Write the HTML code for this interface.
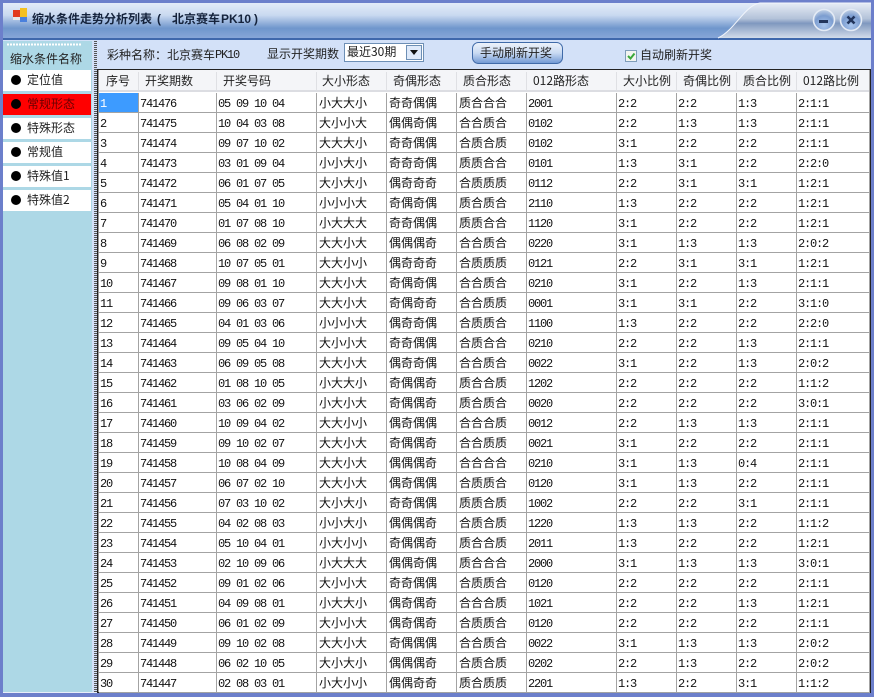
<!DOCTYPE html>
<html><head><meta charset="utf-8"><style>
html,body{margin:0;padding:0}
body{width:874px;height:697px;position:relative;overflow:hidden;background:#d3e1f8;font:12px/20px "WenQuanYi Zen Hei","Noto Sans CJK SC",sans-serif;color:#111}
.a{position:absolute;white-space:nowrap}
.item{position:absolute;left:3px;width:88px;height:21px;background:#fff;line-height:20px}
.item i{position:absolute;left:8px;top:5px;width:10px;height:10px;border-radius:5px;background:#000}
.item span{position:absolute;left:24px;top:0;color:#222}
.hd{position:absolute;top:71px;height:20px;line-height:20px;color:#222;white-space:nowrap}
.sep{position:absolute;top:72px;width:1px;height:18px;background:#dfe0e4}
.m{font:12px/20px "Liberation Mono",monospace;letter-spacing:-1.2px}
table{position:absolute;left:99px;top:93px;border-collapse:separate;border-spacing:0;table-layout:fixed;width:771px}
td{height:15px;padding:4px 0 0 1px;box-sizing:content-box;border-right:1px solid #a3a3a3;border-bottom:1px solid #a3a3a3;font:12px/15px "Liberation Mono",monospace;letter-spacing:-1.2px;color:#111;white-space:nowrap;overflow:hidden}
td.c{height:19px;padding:0 0 0 2px;font:12px/19px "WenQuanYi Zen Hei","Noto Sans CJK SC",sans-serif;letter-spacing:0}
</style></head><body>
<svg class="a" style="left:0;top:0" width="874" height="697" viewBox="0 0 874 697">
<defs>
<linearGradient id="t" x1="0" y1="0" x2="0" y2="1"><stop offset="0" stop-color="#e3ebf8"/><stop offset=".35" stop-color="#c9d9f0"/><stop offset=".72" stop-color="#6f96cc"/><stop offset="1" stop-color="#87a6d8"/></linearGradient>
<linearGradient id="r" x1="0" y1="0" x2="0" y2="1"><stop offset="0" stop-color="#e6ecf6"/><stop offset=".45" stop-color="#b3c2d9"/><stop offset=".58" stop-color="#7f98bf"/><stop offset="1" stop-color="#d3dcea"/></linearGradient>
<radialGradient id="b" cx=".5" cy=".75" r=".7"><stop offset="0" stop-color="#a9c6ee"/><stop offset=".65" stop-color="#7c9dd0"/><stop offset="1" stop-color="#b7c9e2"/></radialGradient>
<linearGradient id="bt" x1="0" y1="0" x2="0" y2="1"><stop offset="0" stop-color="#eef3fb"/><stop offset=".5" stop-color="#c9daf2"/><stop offset="1" stop-color="#6f97d3"/></linearGradient>
</defs>
<rect width="874" height="697" fill="#6c7fcb"/>
<rect x="3" y="3" width="868" height="35" fill="url(#t)"/>
<rect x="3" y="38" width="868" height="2" fill="#3f68ac"/>
<path d="M718 38C735 30 745 5 760 3H871V38Z" fill="url(#r)"/>
<path d="M718 38C735 30 745 5 760 3H871" fill="none" stroke="#f2f5fb" stroke-width="1"/>
<rect x="3" y="40" width="868" height="652" fill="#d3e1f8"/>
<rect x="3" y="692" width="868" height="1" fill="#e8eef9"/>
<rect x="13" y="10" width="7" height="7" fill="#e23a1c"/><rect x="20" y="8" width="7" height="9" fill="#f4c020"/><rect x="20" y="17" width="7" height="5" fill="#4a80dc"/><rect x="13" y="17" width="7" height="3" fill="#e8e8e8"/>
<circle cx="824" cy="20" r="10.5" fill="url(#b)" stroke="#e4ebf5" stroke-width="1.6"/>
<rect x="819" y="20" width="9" height="3" fill="#22355c"/>
<circle cx="851" cy="20" r="10.5" fill="url(#b)" stroke="#e4ebf5" stroke-width="1.6"/>
<path d="M847.5 16.5L854.5 23.5M854.5 16.5L847.5 23.5" stroke="#22355c" stroke-width="2.6"/>
<rect x="3" y="41" width="89" height="651" fill="#add8e6"/>
<line x1="7" y1="44.5" x2="82" y2="44.5" stroke="#fff" stroke-width="2" stroke-dasharray="2 1"/>
<rect x="93" y="41" width="4" height="651" fill="#d3e1f8"/>
<line x1="95.5" y1="41" x2="95.5" y2="692" stroke="#555" stroke-width="3" stroke-dasharray="1 1"/>
<rect x="472.5" y="42.5" width="90" height="21" rx="6" fill="url(#bt)" stroke="#3f6aa8"/>
<rect x="344.5" y="43.5" width="79" height="18" fill="#fff" stroke="#6d8fb5"/>
<rect x="406.5" y="45.5" width="15" height="14" fill="#dfeafa" stroke="#6d8fb5"/>
<path d="M410 50h8l-4 5z" fill="#111"/>
<rect x="625.5" y="50.5" width="11" height="11" fill="#f2f4f0" stroke="#7f9db9"/>
<path d="M628 56l2.5 2.5 4-5" fill="none" stroke="#3aa83a" stroke-width="2"/>
<rect x="97" y="69" width="774" height="624" fill="#fff"/>
<rect x="97.5" y="69.5" width="773" height="623" fill="none" stroke="#222"/>
<rect x="98" y="70" width="1" height="622" fill="#9a9a9a"/>
<rect x="869" y="70" width="1" height="622" fill="#a3a3a3"/>
<rect x="99" y="70" width="770" height="22" fill="#f4f5f8"/>
<rect x="99" y="90" width="770" height="2" fill="#dcdde2"/>
</svg>
<div class="a" style="left:32px;top:9px;font-weight:bold;color:#15233c">缩水条件走势分析列表</div>
<div class="a" style="left:157px;top:9px;font:bold 12px/20px 'Liberation Sans',sans-serif;color:#15233c">(</div>
<div class="a" style="left:172px;top:9px;font-weight:bold;color:#15233c">北京赛车</div>
<div class="a" style="left:221px;top:9px;font:bold 12px/20px 'Liberation Sans',sans-serif;color:#15233c">PK10</div>
<div class="a" style="left:254px;top:9px;font:bold 12px/20px 'Liberation Sans',sans-serif;color:#15233c">)</div>
<div class="a" style="left:10px;top:49px;color:#222">缩水条件名称</div>
<div class="item" style="top:70px"><i></i><span>定位值</span></div>
<div class="item" style="top:94px;background:#f00"><i></i><span style="color:#6a0000">常规形态</span></div>
<div class="item" style="top:118px"><i></i><span>特殊形态</span></div>
<div class="item" style="top:142px"><i></i><span>常规值</span></div>
<div class="item" style="top:166px"><i></i><span>特殊值1</span></div>
<div class="item" style="top:190px"><i></i><span>特殊值2</span></div>
<div class="a" style="left:107px;top:45px;color:#222">彩种名称：</div>
<div class="a" style="left:167px;top:45px;color:#222">北京赛车</div>
<div class="a m" style="left:215px;top:45px;color:#222">PK10</div>
<div class="a" style="left:267px;top:44px;color:#222">显示开奖期数</div>
<div class="a" style="left:347px;top:42px;color:#222">最近30期</div>
<div class="a" style="left:480px;top:43px;color:#222">手动刷新开奖</div>
<div class="a" style="left:640px;top:45px;color:#222">自动刷新开奖</div>
<div class="hd" style="left:106px">序号</div>
<div class="hd" style="left:145px">开奖期数</div>
<div class="hd" style="left:223px">开奖号码</div>
<div class="hd" style="left:322px">大小形态</div>
<div class="hd" style="left:393px">奇偶形态</div>
<div class="hd" style="left:463px">质合形态</div>
<div class="hd" style="left:533px">012路形态</div>
<div class="hd" style="left:623px">大小比例</div>
<div class="hd" style="left:683px">奇偶比例</div>
<div class="hd" style="left:743px">质合比例</div>
<div class="hd" style="left:803px">012路比例</div>
<div class="sep" style="left:138px"></div><div class="sep" style="left:216px"></div><div class="sep" style="left:316px"></div><div class="sep" style="left:386px"></div><div class="sep" style="left:456px"></div><div class="sep" style="left:526px"></div><div class="sep" style="left:616px"></div><div class="sep" style="left:676px"></div><div class="sep" style="left:736px"></div><div class="sep" style="left:796px"></div>
<table>
<colgroup><col style="width:40px"><col style="width:78px"><col style="width:100px"><col style="width:70px"><col style="width:70px"><col style="width:70px"><col style="width:90px"><col style="width:60px"><col style="width:60px"><col style="width:60px"><col style="width:73px"></colgroup>
<tr><td style="background:#3d9bff;color:#fff">1</td><td>741476</td><td>05 09 10 04</td><td class="c">小大大小</td><td class="c">奇奇偶偶</td><td class="c">质合合合</td><td>2001</td><td>2:2</td><td>2:2</td><td>1:3</td><td>2:1:1</td></tr>
<tr><td>2</td><td>741475</td><td>10 04 03 08</td><td class="c">大小小大</td><td class="c">偶偶奇偶</td><td class="c">合合质合</td><td>0102</td><td>2:2</td><td>1:3</td><td>1:3</td><td>2:1:1</td></tr>
<tr><td>3</td><td>741474</td><td>09 07 10 02</td><td class="c">大大大小</td><td class="c">奇奇偶偶</td><td class="c">合质合质</td><td>0102</td><td>3:1</td><td>2:2</td><td>2:2</td><td>2:1:1</td></tr>
<tr><td>4</td><td>741473</td><td>03 01 09 04</td><td class="c">小小大小</td><td class="c">奇奇奇偶</td><td class="c">质质合合</td><td>0101</td><td>1:3</td><td>3:1</td><td>2:2</td><td>2:2:0</td></tr>
<tr><td>5</td><td>741472</td><td>06 01 07 05</td><td class="c">大小大小</td><td class="c">偶奇奇奇</td><td class="c">合质质质</td><td>0112</td><td>2:2</td><td>3:1</td><td>3:1</td><td>1:2:1</td></tr>
<tr><td>6</td><td>741471</td><td>05 04 01 10</td><td class="c">小小小大</td><td class="c">奇偶奇偶</td><td class="c">质合质合</td><td>2110</td><td>1:3</td><td>2:2</td><td>2:2</td><td>1:2:1</td></tr>
<tr><td>7</td><td>741470</td><td>01 07 08 10</td><td class="c">小大大大</td><td class="c">奇奇偶偶</td><td class="c">质质合合</td><td>1120</td><td>3:1</td><td>2:2</td><td>2:2</td><td>1:2:1</td></tr>
<tr><td>8</td><td>741469</td><td>06 08 02 09</td><td class="c">大大小大</td><td class="c">偶偶偶奇</td><td class="c">合合质合</td><td>0220</td><td>3:1</td><td>1:3</td><td>1:3</td><td>2:0:2</td></tr>
<tr><td>9</td><td>741468</td><td>10 07 05 01</td><td class="c">大大小小</td><td class="c">偶奇奇奇</td><td class="c">合质质质</td><td>0121</td><td>2:2</td><td>3:1</td><td>3:1</td><td>1:2:1</td></tr>
<tr><td>10</td><td>741467</td><td>09 08 01 10</td><td class="c">大大小大</td><td class="c">奇偶奇偶</td><td class="c">合合质合</td><td>0210</td><td>3:1</td><td>2:2</td><td>1:3</td><td>2:1:1</td></tr>
<tr><td>11</td><td>741466</td><td>09 06 03 07</td><td class="c">大大小大</td><td class="c">奇偶奇奇</td><td class="c">合合质质</td><td>0001</td><td>3:1</td><td>3:1</td><td>2:2</td><td>3:1:0</td></tr>
<tr><td>12</td><td>741465</td><td>04 01 03 06</td><td class="c">小小小大</td><td class="c">偶奇奇偶</td><td class="c">合质质合</td><td>1100</td><td>1:3</td><td>2:2</td><td>2:2</td><td>2:2:0</td></tr>
<tr><td>13</td><td>741464</td><td>09 05 04 10</td><td class="c">大小小大</td><td class="c">奇奇偶偶</td><td class="c">合质合合</td><td>0210</td><td>2:2</td><td>2:2</td><td>1:3</td><td>2:1:1</td></tr>
<tr><td>14</td><td>741463</td><td>06 09 05 08</td><td class="c">大大小大</td><td class="c">偶奇奇偶</td><td class="c">合合质合</td><td>0022</td><td>3:1</td><td>2:2</td><td>1:3</td><td>2:0:2</td></tr>
<tr><td>15</td><td>741462</td><td>01 08 10 05</td><td class="c">小大大小</td><td class="c">奇偶偶奇</td><td class="c">质合合质</td><td>1202</td><td>2:2</td><td>2:2</td><td>2:2</td><td>1:1:2</td></tr>
<tr><td>16</td><td>741461</td><td>03 06 02 09</td><td class="c">小大小大</td><td class="c">奇偶偶奇</td><td class="c">质合质合</td><td>0020</td><td>2:2</td><td>2:2</td><td>2:2</td><td>3:0:1</td></tr>
<tr><td>17</td><td>741460</td><td>10 09 04 02</td><td class="c">大大小小</td><td class="c">偶奇偶偶</td><td class="c">合合合质</td><td>0012</td><td>2:2</td><td>1:3</td><td>1:3</td><td>2:1:1</td></tr>
<tr><td>18</td><td>741459</td><td>09 10 02 07</td><td class="c">大大小大</td><td class="c">奇偶偶奇</td><td class="c">合合质质</td><td>0021</td><td>3:1</td><td>2:2</td><td>2:2</td><td>2:1:1</td></tr>
<tr><td>19</td><td>741458</td><td>10 08 04 09</td><td class="c">大大小大</td><td class="c">偶偶偶奇</td><td class="c">合合合合</td><td>0210</td><td>3:1</td><td>1:3</td><td>0:4</td><td>2:1:1</td></tr>
<tr><td>20</td><td>741457</td><td>06 07 02 10</td><td class="c">大大小大</td><td class="c">偶奇偶偶</td><td class="c">合质质合</td><td>0120</td><td>3:1</td><td>1:3</td><td>2:2</td><td>2:1:1</td></tr>
<tr><td>21</td><td>741456</td><td>07 03 10 02</td><td class="c">大小大小</td><td class="c">奇奇偶偶</td><td class="c">质质合质</td><td>1002</td><td>2:2</td><td>2:2</td><td>3:1</td><td>2:1:1</td></tr>
<tr><td>22</td><td>741455</td><td>04 02 08 03</td><td class="c">小小大小</td><td class="c">偶偶偶奇</td><td class="c">合质合质</td><td>1220</td><td>1:3</td><td>1:3</td><td>2:2</td><td>1:1:2</td></tr>
<tr><td>23</td><td>741454</td><td>05 10 04 01</td><td class="c">小大小小</td><td class="c">奇偶偶奇</td><td class="c">质合合质</td><td>2011</td><td>1:3</td><td>2:2</td><td>2:2</td><td>1:2:1</td></tr>
<tr><td>24</td><td>741453</td><td>02 10 09 06</td><td class="c">小大大大</td><td class="c">偶偶奇偶</td><td class="c">质合合合</td><td>2000</td><td>3:1</td><td>1:3</td><td>1:3</td><td>3:0:1</td></tr>
<tr><td>25</td><td>741452</td><td>09 01 02 06</td><td class="c">大小小大</td><td class="c">奇奇偶偶</td><td class="c">合质质合</td><td>0120</td><td>2:2</td><td>2:2</td><td>2:2</td><td>2:1:1</td></tr>
<tr><td>26</td><td>741451</td><td>04 09 08 01</td><td class="c">小大大小</td><td class="c">偶奇偶奇</td><td class="c">合合合质</td><td>1021</td><td>2:2</td><td>2:2</td><td>1:3</td><td>1:2:1</td></tr>
<tr><td>27</td><td>741450</td><td>06 01 02 09</td><td class="c">大小小大</td><td class="c">偶奇偶奇</td><td class="c">合质质合</td><td>0120</td><td>2:2</td><td>2:2</td><td>2:2</td><td>2:1:1</td></tr>
<tr><td>28</td><td>741449</td><td>09 10 02 08</td><td class="c">大大小大</td><td class="c">奇偶偶偶</td><td class="c">合合质合</td><td>0022</td><td>3:1</td><td>1:3</td><td>1:3</td><td>2:0:2</td></tr>
<tr><td>29</td><td>741448</td><td>06 02 10 05</td><td class="c">大小大小</td><td class="c">偶偶偶奇</td><td class="c">合质合质</td><td>0202</td><td>2:2</td><td>1:3</td><td>2:2</td><td>2:0:2</td></tr>
<tr><td>30</td><td>741447</td><td>02 08 03 01</td><td class="c">小大小小</td><td class="c">偶偶奇奇</td><td class="c">质合质质</td><td>2201</td><td>1:3</td><td>2:2</td><td>3:1</td><td>1:1:2</td></tr>
</table>
</body></html>
